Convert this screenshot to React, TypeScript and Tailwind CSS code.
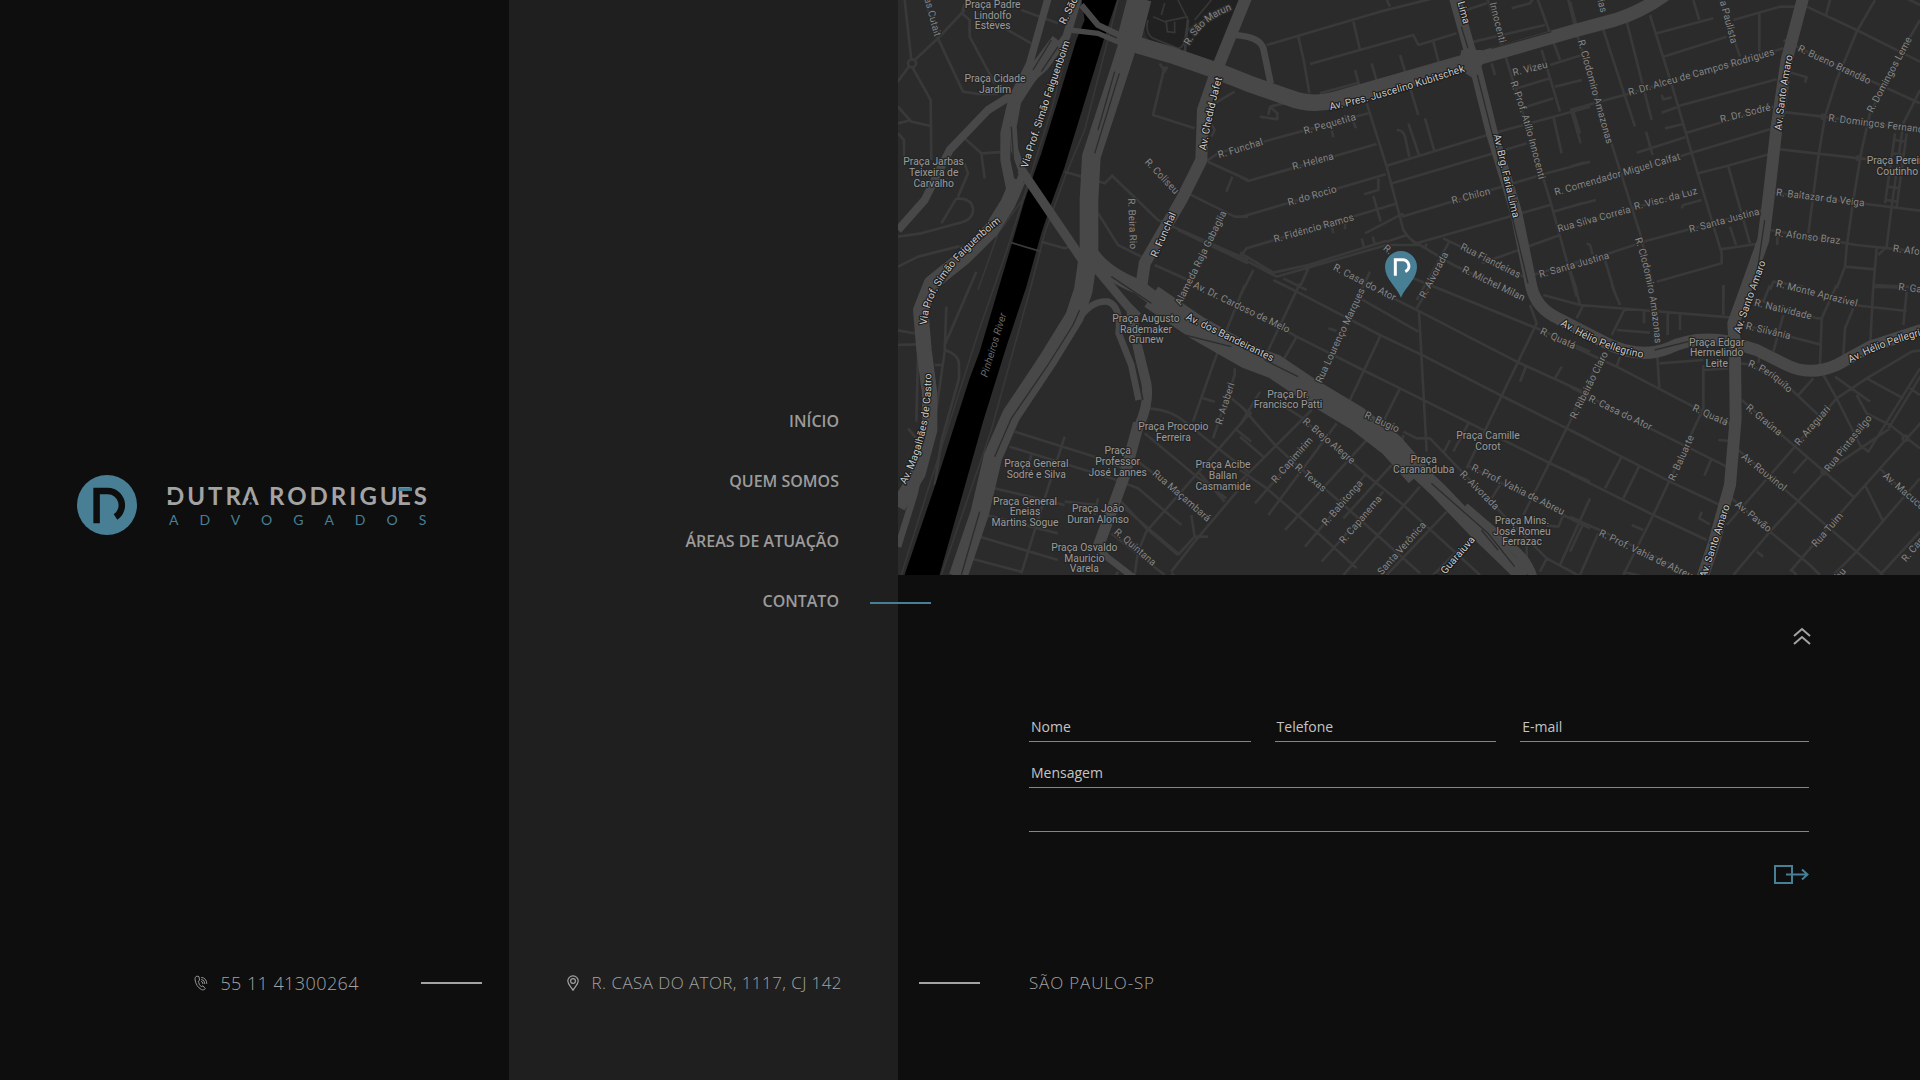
import React from "react";

type Label = { t: string; p: number[]; major?: boolean };
type Place = { x: number; y: number; lines: string[] };
type Tile = { x: number; y: number; streets: string; labels: Label[]; places: Place[] };

/* The map is drawn on a 3066 x 1725 canvas that is divided into six tiles. */
const tiles: Tile[] = [
  {
    x: 0,
    y: 0,
    streets:
      "M-5 250L40 190L120 115L200 30M120 115L80 0M120 115L195 275L240 282H300M40 180L20 0M42 200L98 300L100 480M0 320L40 365L98 378M0 370L40 360M200 10L192 40L215 60V110L290 250M240 40L400 130M370 30L480 70M200 415L250 460L330 455M250 460L260 535M0 400L18 420V470M175 595Q225 595 225 630Q225 660 180 670L70 700L0 710M175 595L130 670M200 490L210 520L180 590M0 800L60 770L180 740L220 740M800 200L765 345L890 385M785 190L800 215L808 200M930 485L1050 540M1003 530L985 575M870 580L1010 650L1050 650M640 525L780 660L1050 780M600 640L660 735L730 770M770 795L870 840M500 515L620 550L645 525M920 340L950 390L940 410M900 500L960 460L1070 425M950 310L1010 275M840 690L1050 790M430 725L500 745L530 735M860 160L870 60",
    labels: [
      { t: "R. São", p: [490, 75, 534, -12], major: true },
      { t: "Via Prof. Simão Faiguenboim", p: [378, 505, 440, 310, 508, 120], major: true },
      { t: "Via Prof. Simão Faiguenboim", p: [77, 970, 85, 830, 300, 660], major: true },
      { t: "Av. Chedid Jafet", p: [915, 447, 932, 340, 962, 235], major: true },
      { t: "R. Funchal", p: [768, 768, 825, 640], major: true },
      { t: "R. São Marun", p: [872, 120, 910, 55, 985, 25] },
      { t: "R. Coliseu", p: [753, 488, 831, 570] },
      { t: "R. Beira Rio", p: [700, 597, 706, 745] },
      { t: "Alameda Raja Gabaglia", p: [842, 907, 974, 640] },
      { t: "R. Funchal", p: [962, 465, 1092, 425] },
      { t: "Av. Dr. Cardoso de Melo", p: [892, 855, 1170, 988] },
      { t: "as Cutait", p: [90, 0, 118, 102] },
    ],
    places: [
      { x: 284, y: 14, lines: ["Praça Padre", "Lindolfo", "Esteves"] },
      { x: 291, y: 237, lines: ["Praça Cidade", "Jardim"] },
      { x: 107, y: 486, lines: ["Praça Jarbas", "Teixeira de", "Carvalho"] },
    ],
  },
  {
    x: 1026,
    y: 0,
    streets:
      "M80 135L420 35L600 -10M175 110L192 185L208 280M340 65L360 150M210 192L520 105L535 135L650 100M580 125L598 195M440 0L450 20M480 165L535 345M395 190L412 250M345 210L360 265M240 280L355 248M380 310L440 500L490 690Q510 720 530 730M70 425L385 340M0 530L25 543L410 432M0 652L437 523M0 770L20 745L465 612M440 497L760 400L1050 320M457 550L860 430M485 650L920 520L1050 485M530 730L930 615M470 390Q490 390 495 410L508 470M505 370L537 465M555 355L582 450M415 535V570L372 583M400 588L422 665M0 772L110 830L440 735L540 735L640 795L780 860M0 758L100 818L205 795L440 722M440 725L500 705L530 735M610 715L850 830M628 725L530 900M40 810L0 890M130 835L200 870M205 805L180 860M365 715L372 742M398 710L405 735M740 -10L800 180L930 600L1010 890M650 40L740 10M680 130L915 75M890 -10L960 180M985 0L1005 80M815 25L870 10L880 -5M905 150L960 335M830 265L930 235M860 320L940 295M940 350L965 460M1000 335L1020 400M725 790L960 705M860 830L1050 775M755 190L765 225M930 195L1026 165M945 260L1026 240M940 635L1026 610M375 700L490 640M90 320L130 310M90 320L85 345M60 350L112 358V340L90 320M275 390L280 412M340 365L348 385M275 680L280 700M315 670V688M560 730L555 745",
    labels: [
      { t: "Av. Pres. Juscelino Kubitschek", p: [273, 320, 422, 288, 668, 206], major: true },
      { t: "Av. Brg. Faria Lima", p: [771, 405, 828, 650], major: true },
      { t: "Lima", p: [662, 5, 680, 70], major: true },
      { t: "R. Pequetita", p: [193, 393, 345, 350] },
      { t: "R. Helena", p: [160, 500, 278, 468] },
      { t: "R. do Rocio", p: [145, 607, 287, 567] },
      { t: "R. Fidêncio Ramos", p: [105, 717, 337, 652] },
      { t: "R. Chilon", p: [637, 602, 748, 573] },
      { t: "R. Vizeu", p: [820, 218, 920, 193] },
      { t: "R. Prof. Atílio Innocenti", p: [822, 248, 870, 382, 905, 532] },
      { t: "Innocenti", p: [759, 10, 788, 125] },
      { t: "R. Casa do Ator", p: [284, 801, 464, 893] },
      { t: "R. Alvorada", p: [547, 890, 616, 760] },
      { t: "R.", p: [434, 740, 454, 756] },
      { t: "Rua Fiandeiras", p: [666, 739, 838, 825] },
      { t: "R. Michel Milan", p: [672, 808, 850, 893] },
      { t: "R. Santa Justina", p: [900, 823, 1104, 766] },
      { t: "R. Comendador Miguel Calfat", p: [948, 576, 1316, 470] },
      { t: "Rua Silva Correia", p: [956, 686, 1168, 628] },
    ],
    places: [],
  },
  {
    x: 2016,
    y: 0,
    streets:
      "M0 330L170 283L640 145M260 100L430 55M280 170L470 110M490 60L630 20L710 20L860 90L1050 185M370 0L388 60M450 -5L510 170M568 40V155M240 45L310 270L380 510L455 760V790L260 845M170 65L245 360M100 90L195 380M20 100L210 700L250 860M0 5L20 80M325 318L620 238M275 338L320 322M285 385L340 372M350 398L610 320M200 458L345 412M228 395L248 465M275 285L280 298L305 292M360 460L600 388M0 570L360 460M385 520L470 498L600 462M475 500L540 730M480 680L498 735M450 748L560 732M0 680L380 570M335 625L340 615L395 600M0 800L230 722L575 630M5 335L32 430M0 500L45 487M0 620L78 600M50 730L60 735L68 765M105 780L135 880M0 810L20 870M780 0L768 45M915 0L860 95L800 240L765 350L745 470L715 700M1050 60L1015 120L900 340L875 450L850 600L830 740L825 800L800 865M640 120L700 150L1050 310M655 215L710 232L705 248M630 335L760 350L1050 390M620 447L870 475L900 478M610 578L1050 632M600 690L860 735L1050 755M1050 270L1000 370L965 620L950 740L925 765M1010 400L980 620M975 400L945 610M825 800L915 808M920 745L910 860M915 855L1050 862M622 700V735M600 870L610 845L700 860M460 855V900M1010 -5L1050 15M975 420L1005 425M970 460L1000 465M962 510L995 515M955 560L988 565M950 600L982 605",
    labels: [
      { t: "ias", p: [92, -2, 102, 38] },
      { t: "R. Clodomiro Amazonas", p: [34, 125, 118, 425] },
      { t: "R. Clodomiro Amazonas", p: [206, 720, 250, 850, 264, 1022] },
      { t: "R. Dr. Alceu de Campos Rodrigues", p: [180, 276, 607, 156] },
      { t: "R. Dr. Sodré", p: [452, 358, 600, 321] },
      { t: "a Paulista", p: [460, 5, 492, 126] },
      { t: "R. Visc. da Luz", p: [194, 620, 380, 572] },
      { t: "R. Santa Justina", p: [360, 688, 565, 634] },
      { t: "R. Bueno Brandão", p: [690, 145, 897, 242] },
      { t: "R. Domingos Leme", p: [900, 332, 1016, 115] },
      { t: "R. Domingos Fernandes", p: [780, 354, 1087, 392] },
      { t: "R. Baltazar da Veiga", p: [622, 577, 880, 609] },
      { t: "R. Afonso Braz", p: [618, 698, 808, 722] },
      { t: "R. Afonso Braz", p: [972, 745, 1162, 770] },
      { t: "Av. Santo Amaro", p: [625, 388, 636, 270, 658, 168], major: true },
      { t: "Av. Santo Amaro", p: [502, 995, 577, 785], major: true },
      { t: "R. Monte Aprazível", p: [622, 850, 860, 910] },
      { t: "R. Gaivota", p: [985, 860, 1120, 876] },
    ],
    places: [{ x: 982, y: 482, lines: ["Praça Pereira", "Coutinho"] }],
  },
  {
    x: 0,
    y: 855,
    streets:
      "M-5 135L50 145M-5 180L55 178M145 65L140 200L110 410M235 -40L140 180M140 195Q185 210 183 240V280L130 470L110 600M110 240H135M60 210L55 410M30 430L55 460M350 440L590 515L700 560M335 485L640 580L720 610L850 720M500 455L440 640L370 865M290 610L500 660M265 690L480 745M245 755L480 825M225 822L370 860M400 510L385 560M600 640L590 690M500 650L600 660M755 370Q820 375 860 410L960 490L1050 560M740 445L890 570L985 640M720 530L780 575M880 690L890 755M680 670L840 805M640 745L800 870M820 860L890 770L1050 580M890 755L840 810M1060 380L745 740L720 800L710 870M1040 0L950 225L885 410M915 340L950 350M1010 250V270L945 460M1000 340L1060 390M900 560L980 650M1010 430L1060 470M930 755L890 755M660 640L750 735L840 810M820 865L860 900M660 860L650 880",
    labels: [
      { t: "Av. Magalhães de Castro", p: [12, 598, 92, 450, 90, 262], major: true },
      { t: "Av. dos Bandeirantes", p: [864, 92, 1128, 222], major: true },
      { t: "R. Araberi", p: [962, 417, 1000, 295] },
      { t: "Rua Maçambará", p: [770, 562, 932, 702] },
      { t: "R. Quintana", p: [654, 737, 770, 836] },
    ],
    places: [
      { x: 744, y: 101, lines: ["Praça Augusto", "Rademaker", "Grunew"] },
      { x: 826, y: 425, lines: ["Praça Procopio", "Ferreira"] },
      { x: 659, y: 498, lines: ["Praça", "Professor", "José Lannes"] },
      { x: 415, y: 537, lines: ["Praça General", "Sodré e Silva"] },
      { x: 975, y: 540, lines: ["Praça Acibe", "Ballan", "Casmamide"] },
      { x: 381, y: 649, lines: ["Praça General", "Eneias", "Martins Sogue"] },
      { x: 600, y: 671, lines: ["Praça João", "Duran Alonso"] },
      { x: 559, y: 788, lines: ["Praça Osvaldo", "Mauricio", "Varela"] },
    ],
  },
  {
    x: 1026,
    y: 855,
    streets:
      "M180 -5L85 195M100 -15L170 20L420 150L550 212L780 330L980 430L1050 465M0 60L170 155L375 258L480 310L680 410L920 530L1050 590M360 40L535 140M440 30L540 80L830 230L1050 330M520 -20L890 130L1050 200M170 155L130 225M420 155L330 345M480 310L430 410M390 -40L235 290M537 80L560 500M595 -40L530 70M870 60L890 115L680 550M860 240L840 290M965 245L945 280M1050 290L850 690M685 415L640 500M630 465L612 500M490 440L530 460H570L800 700L920 820L1050 890M680 540L970 690L955 725L920 722M970 690L1050 730M490 450L485 475M780 600L755 640M920 820L900 860M1050 640L960 840M265 130L290 138M860 780V820M185 400L380 570L490 660L720 870M0 360L105 480L170 540L300 650L540 865M0 555L80 610L230 740L350 850M215 375L0 590M290 415L85 690M215 460L45 655M380 465L135 735M375 570L195 785M455 540L310 700M430 620L245 830M540 605L310 870M620 680L440 870M700 750L580 870M60 320L0 420M110 350L190 400M0 455L70 515",
    labels: [
      { t: "Rua Lourenço Marques", p: [237, 287, 364, 15] },
      { t: "R. Quatá", p: [904, 137, 1004, 183] },
      { t: "R. Bugio", p: [377, 388, 475, 433] },
      { t: "R. Brejo Alegre", p: [194, 405, 340, 530] },
      { t: "R. Capimirim", p: [102, 586, 210, 463] },
      { t: "R. Texas", p: [170, 543, 254, 613] },
      { t: "R. Babitonga", p: [252, 716, 362, 590] },
      { t: "R. Capanema", p: [305, 770, 418, 637] },
      { t: "Santa Verônica", p: [420, 862, 550, 717] },
      { t: "R. Guaraiuva", p: [584, 890, 700, 757], major: true },
      { t: "R. Alvorada", p: [667, 564, 770, 667] },
      { t: "R. Prof. Vahia de Abreu", p: [699, 546, 970, 681] },
      { t: "R. Ribeirão Claro", p: [1000, 395, 1094, 205] },
    ],
    places: [
      { x: 144, y: 328, lines: ["Praça Dr.", "Francisco Patti"] },
      { x: 551, y: 523, lines: ["Praça", "Carananduba"] },
      { x: 744, y: 453, lines: ["Praça Camille", "Corot"] },
      { x: 846, y: 707, lines: ["Praça Mins.", "José Romeu", "Ferrazac"] },
    ],
  },
  {
    x: 2016,
    y: 855,
    streets:
      "M-80 30L30 60L480 97M15 0L30 60M125 0L150 60M40 60L20 100M460 0V90M165 70L125 150M140 135L240 143M222 75V115M293 80V150M330 85V135M262 215L268 310M268 235L400 225M150 215L140 245M400 240V370L250 690L160 870M400 255L475 250M0 180L140 245L370 365L485 420M0 305L240 430L470 545M0 435L155 515L300 590L450 660M0 565L250 690L410 765M0 695L100 740L350 860M155 515L105 610M207 545L160 640M425 520L403 572M90 220L0 400M40 715L0 800M85 745L30 870M445 465L480 468M395 680L388 700L420 718M185 720L220 735M160 860L240 880M550 40L740 100H760M600 0L580 50M640 90L610 200M520 120L750 178M800 0L755 100L750 240M850 70L825 130L820 210M910 0L900 190M850 60L1010 78M1010 20L1000 120M910 5L1000 8M510 235L540 238L660 310L745 390M730 280L685 330M515 345L670 480L850 635M505 495L640 610L860 800L940 870M485 640L600 740L720 840L750 870M1060 195L1025 200L890 280L800 340L670 490L470 720M760 270L800 340L870 480L895 500L1050 250M795 275L900 350M860 330L890 385L960 420L1050 490M960 430L760 565L600 740L490 870M1060 260L955 430M890 280L1000 340M1060 405L850 640L660 860M1020 310L1050 330M930 550L1050 670M1050 580L860 800L790 870M885 600L940 710M1050 740L930 870M710 520L670 565M560 800L580 815M665 855L680 870M568 215L565 235",
    labels: [
      { t: "Av. Hélio Pellegrino", p: [-22, 113, 100, 188, 217, 208], major: true },
      { t: "Av. Hélio Pellegrino", p: [842, 222, 950, 165, 1078, 136], major: true },
      { t: "Av. Santo Amaro", p: [400, 872, 468, 665], major: true },
      { t: "R. Casa do Ator", p: [60, 339, 242, 426] },
      { t: "R. Quatá", p: [370, 367, 472, 413] },
      { t: "R. Baluarte", p: [305, 582, 362, 455] },
      { t: "R. Prof. Vahia de Abreu", p: [92, 743, 364, 873] },
      { t: "R. Natividade", p: [557, 53, 722, 93] },
      { t: "R. Silvânia", p: [530, 122, 660, 153] },
      { t: "R. Periquito", p: [540, 235, 612, 262, 660, 315] },
      { t: "R. Graúna", p: [532, 364, 632, 446] },
      { t: "R. Araguari", p: [680, 476, 774, 367] },
      { t: "Rua Pintassilgo", p: [770, 555, 898, 395] },
      { t: "Av. Rouxinol", p: [518, 510, 646, 612] },
      { t: "Av. Pavão", p: [500, 654, 600, 735] },
      { t: "Rua Tuim", p: [730, 782, 814, 686] },
      { t: "Av. Macuco", p: [944, 568, 1060, 668] },
      { t: "R. Canário", p: [1004, 822, 1085, 725] },
      { t: "Rua Inhambu", p: [715, 985, 818, 858] },
    ],
    places: [{ x: 440, y: 172, lines: ["Praça Edgar", "Hermelindo", "Leite"] }],
  },
];

const roads: { d: string; w: number }[] = [
  { w: 24, d: "M540 -5L505 110L440 200L350 280L270 330L155 450L80 600L0 690" },
  { w: 40, d: "M480 120L390 240L345 310" },
  { w: 30, d: "M345 300L322 400L322 480L340 570" },
  { w: 46, d: "M360 540L330 610L280 690L200 770L100 850L68 930L78 1050L95 1180V1290L60 1420L0 1520" },
  { w: 22, d: "M450 -5L395 190L350 280" },
  { w: 22, d: "M365 270L345 380L350 450L375 520L350 580" },
  { w: 20, d: "M80 1330L50 1480L0 1640" },
  { w: 28, d: "M370 510L560 790" },
  { w: 18, d: "M550 15L600 75L670 108" },
  { w: 16, d: "M515 90L600 100L670 130" },
  { w: 72, d: "M725 -5L690 130" },
  { w: 56, d: "M700 100L665 210L580 470L573 600V750L556 870L530 950L450 1080L340 1245L285 1370L245 1540L180 1730" },
  { w: 50, d: "M700 130L820 165L950 210L1050 250L1170 292Q1240 320 1310 300L1710 185" },
  { w: 40, d: "M1690 190L2020 95L2150 60Q2230 35 2300 -15" },
  { w: 20, d: "M1010 105Q1085 110 1096 145L1118 250" },
  { w: 36, d: "M1045 -10L960 200L915 330L910 480L850 600L780 720L740 790L728 870" },
  { w: 44, d: "M580 760Q620 820 720 860L800 920L900 985L1050 1070" },
  { w: 26, d: "M590 800L690 920L720 950" },
  { w: 74, d: "M760 890L900 985L1050 1070L1130 1100L1226 1165L1376 1255L1480 1335L1560 1425" },
  { w: 50, d: "M1540 1395L1620 1470L1730 1585L1880 1730" },
  { w: 26, d: "M1700 1520L1840 1640Q1890 1680 1905 1730" },
  { w: 20, d: "M540 960Q580 900 630 905Q670 920 662 1000L700 1095L722 1200" },
  { w: 30, d: "M700 930L718 1040L745 1150Q755 1210 720 1285" },
  { w: 34, d: "M722 1270L680 1425L640 1535L600 1640" },
  { w: 20, d: "M600 1640L625 1670L710 1735" },
  { w: 36, d: "M1670 -10L1712 140L1732 200L1782 400L1855 640L1900 860Q1915 925 1980 955L2116 1025Q2220 1080 2310 1045Q2390 1005 2496 1025L2576 1050L2666 1095Q2736 1130 2816 1095L2916 1040L3070 990" },
  { w: 36, d: "M2716 -10L2666 180L2636 380L2611 600L2596 720L2546 860L2506 970L2511 1055L2513 1255L2496 1455L2446 1635L2412 1735" },
];

function arc(p: number[]) {
  const [x1, y1] = p;
  const cx = p.length === 6 ? p[2] : (p[0] + p[2]) / 2;
  const cy = p.length === 6 ? p[3] : (p[1] + p[3]) / 2;
  const x2 = p[p.length - 2];
  const y2 = p[p.length - 1];
  const k = 40;
  const a = Math.hypot(cx - x1, cy - y1);
  const b = Math.hypot(x2 - cx, y2 - cy);
  const sx = x1 - ((cx - x1) / a) * k;
  const sy = y1 - ((cy - y1) / a) * k;
  const ex = x2 + ((x2 - cx) / b) * k;
  const ey = y2 + ((y2 - cy) / b) * k;
  return `M${sx} ${sy}L${x1} ${y1}Q${cx} ${cy} ${x2} ${y2}L${ex} ${ey}`;
}

function CityMap() {
  return (
    <svg
      viewBox="0 0 3066 1725"
      preserveAspectRatio="xMidYMid slice"
      className="absolute inset-0 h-full w-full"
      role="img"
      aria-label="Mapa do escritório"
      fontFamily="Roboto, sans-serif"
      fontSize="31"
    >
      <rect width="3066" height="1725" fill="#2b2b2b" />
      <path d="M745 -5H1035L970 190L760 125Q735 110 740 60Z" fill="#212121" />
      <g fill="none" stroke="#373737" strokeWidth="5">
        <path d="M750 60Q740 100 765 115L840 145Q855 145 860 120L870 60L840 0M765 50L800 65L870 50M805 65L808 95L830 98V65M800 10L790 45M890 60L940 0M870 90L950 40" />
        <path d="M660 0L640 80L560 390L505 520L440 700L400 855L280 1290L130 1725M510 140L460 330L330 740L240 1000L80 1500L10 1725M380 590L300 700L240 870M190 740L225 760" />
      </g>
      <g fill="none" stroke="#393939" strokeWidth="8" strokeLinejoin="round">
        {tiles.map((t, i) => (
          <path key={i} d={t.streets} transform={`translate(${t.x} ${t.y})`} />
        ))}
        <circle cx="42" cy="190" r="12" fill="#2b2b2b" />
        <circle cx="2776" cy="350" r="6" />
        <circle cx="2882" cy="475" r="6" />
        <circle cx="3022" cy="1315" r="8" />
        <circle cx="2778" cy="1416" r="7" />
      </g>
      <path
        d="M550 -5L560 60L535 120L480 300L430 460L380 600L345 720L300 870L245 1055L215 1135L115 1445L18 1730H123L200 1460L255 1265L325 1040L385 860L430 700L460 610L500 500L620 110L658 -5Z"
        fill="#000"
      />
      <path d="M340 728L430 755" stroke="#3a3a3a" strokeWidth="5" />
      <g fill="none" stroke="#484848" strokeLinejoin="round">
        {roads.map((r, i) => (
          <path key={i} d={r.d} strokeWidth={r.w} />
        ))}
      </g>
      <path d="M1690 150L1750 150L1770 170L1738 215L1725 235L1680 205Z" fill="#484848" />
      <g fill="none" stroke="#2d2d2d" strokeWidth="4">
        <path d="M664 220L590 460M650 215L600 390M545 930L525 975L450 1095L340 1255L290 1370M245 1535L190 1725M1780 145L1960 95M1690 80L1710 145M1738 225L1790 430L1890 850M460 120L405 210M480 140L430 215M340 380L350 530M700 1030L735 1200M640 830L760 910M800 990L1000 1040M1100 1080L1200 1130M1600 1450L1770 1600L1850 1700M1750 1590L1800 1650M2270 1050L2370 1025M2600 660L2580 800" />
      </g>
      <g textAnchor="middle" strokeLinejoin="round" paintOrder="stroke">
        {tiles.map((t, i) => (
          <g key={i} transform={`translate(${t.x} ${t.y})`}>
            {t.labels.map((l, j) => (
              <React.Fragment key={j}>
                <path id={`way-${i}-${j}`} d={arc(l.p)} fill="none" />
                <text
                  dy="10"
                  fontSize={l.major ? 31 : 30}
                  fill={l.major ? "#c8c8c8" : "#868686"}
                  stroke={l.major ? "#1c1c1c" : "#2b2b2b"}
                  strokeWidth={l.major ? 7 : 8}
                >
                  <textPath href={`#way-${i}-${j}`} startOffset="50%">
                    {l.t}
                  </textPath>
                </text>
              </React.Fragment>
            ))}
            {t.places.map((p, j) => (
              <text key={j} fill="#9a9a9a" stroke="#252525" strokeWidth="7">
                {p.lines.map((line, k) => (
                  <tspan key={k} x={p.x} y={p.y + 10 + k * 32}>
                    {line}
                  </tspan>
                ))}
              </text>
            ))}
          </g>
        ))}
        <text transform="translate(287 1035) rotate(-73)" y="10" fill="#6a6a6a" fontStyle="italic">
          Pinheiros River
        </text>
      </g>
      <g transform="translate(1509 801)">
        <path d="M0 92C-14 58 -48 36 -48 0A48 48 0 0 1 48 0C48 36 14 58 0 92Z" fill="#487f95" />
        <path d="M-17 26V-22H3A19 19 0 0 1 13 14" fill="none" stroke="#fff" strokeWidth="9" />
      </g>
    </svg>
  );
}

function Logo() {
  return (
    <svg viewBox="0 0 356 62" className="w-[356px] max-w-full" role="img" aria-label="Dutra Rodrigues Advogados">
      <circle cx="30" cy="31" r="30" fill="#487f95" />
      <path d="M19.6 49.3V17H31A14.2 14.2 0 0 1 38.500 43" fill="none" stroke="#0e0e0e" strokeWidth="6.500" />
      <g fontFamily="Lato, sans-serif">
        <text y="31" fontSize="24" fontWeight="700" letterSpacing="3" fill="#a3a3a3">
          <tspan x="89">DUTR</tspan>
          <tspan x="165">A </tspan>
          <tspan x="192">RODRIGU</tspan>
          <tspan x="320">ES</tspan>
        </text>
        <text x="92" y="51" fontSize="14" letterSpacing="21" fill="#487f95">
          ADVOGADOS
        </text>
      </g>
      <path d="M90 21H96V26H90Z" fill="#0e0e0e" />
      <path d="M173.500 19.500L178.500 32H168.500Z" fill="#0e0e0e" />
      <circle cx="173.500" cy="29.500" r="1.300" fill="#487f95" />
      <path d="M321 13.500H335V17H321Z" fill="#487f95" />
    </svg>
  );
}

const nav = ["INÍCIO", "QUEM SOMOS", "ÁREAS DE ATUAÇÃO", "CONTATO"];

const footerText = "text-[17px] leading-7 font-light text-[#a3a3a3] whitespace-nowrap";

function Field({ label, type }: { label: string; type: string }) {
  return (
    <label className="flex h-[26px] items-start gap-2 border-b border-[#858585] pt-px pl-0.5">
      <span className="whitespace-nowrap">{label}</span>
      <input type={type} className="h-5 w-full min-w-0 bg-transparent outline-none" />
    </label>
  );
}

export default function App() {
  return (
    <div className="grid min-h-screen grid-cols-[509fr_389fr_1022fr] bg-[#0e0e0e] font-['Open_Sans',sans-serif]">
      <header className="flex flex-col">
        <a href="#inicio" className="flex flex-1 items-center justify-center pt-10">
          <Logo />
        </a>
        <div className="flex items-center justify-end gap-[62px] pr-[27px] pb-[83px]">
          <a href="tel:551141300264" className={`flex items-center gap-3 tracking-wide ${footerText}`}>
            <svg viewBox="0 0 14 16" className="h-4 w-3.5" fill="none" stroke="#a3a3a3" strokeWidth="0.9">
              <path d="M3.200 1.200C1.400 1.200 .8 3 1.100 5C1.500 8.500 4 13 7.500 14.600C9 15.200 10.600 14.800 11.200 13.600L9 10.800L7.300 11.600C5.600 10.600 4.600 8.200 4.500 6.200L5.600 5L4.900 1.600Z" />
              <path d="M7 6.300Q8.800 6.600 9 9M7.200 4.300Q10.600 4.800 10.900 9M7.200 2.400Q12.600 3 12.800 8.800" />
            </svg>
            <span className="text-lg leading-7">55 11 41300264</span>
          </a>
          <span className="h-0.5 w-[61px] bg-[#a3a3a3]" />
        </div>
      </header>

      <div className="flex flex-col bg-[#1f1f1f]">
        <nav className="flex flex-1 flex-col justify-center pt-[53px]">
          {nav.map((item) => (
            <a
              key={item}
              href="#"
              className="relative flex h-[60px] items-center justify-end pr-[59px] text-base font-semibold text-[#9b9b9b]"
            >
              {item}
              {item === "CONTATO" && <span className="absolute top-[31px] -right-[33px] z-10 h-0.5 w-[61px] bg-[#487f95]" />}
            </a>
          ))}
        </nav>
        <address className={`flex items-center justify-end gap-3 pr-14 pb-[83px] tracking-wide not-italic ${footerText}`}>
          <svg viewBox="0 0 14 16" className="h-4 w-3.5" fill="none" stroke="#a3a3a3" strokeWidth="1.200">
            <path d="M7 15.200C5.500 12 1.800 9.500 1.800 6A5.200 5.200 0 0 1 12.200 6C12.200 9.500 8.500 12 7 15.200Z" />
            <circle cx="7" cy="6" r="2.400" />
          </svg>
          R. CASA DO ATOR, 1117, CJ 142
        </address>
      </div>

      <main className="flex flex-col">
        <div className="relative min-h-[400px] flex-1 overflow-hidden">
          <CityMap />
        </div>
        <div className="flex flex-col pt-[52px] pr-[111px] pl-[131px] text-sm leading-5 text-[#c4c4c4]">
          <button type="button" aria-label="Voltar ao topo" className="-mr-0.5 self-end">
            <svg viewBox="0 0 18 18" className="h-[18px] w-[18px]" fill="none" stroke="#a3a3a3" strokeWidth="2">
              <path d="M1 9L9 2L17 9M1 17L9 10L17 17" />
            </svg>
          </button>
          <form className="mt-[71px] flex flex-col">
            <div className="grid grid-cols-[221fr_221fr_288fr] gap-x-6">
              <Field label="Nome" type="text" />
              <Field label="Telefone" type="tel" />
              <Field label="E-mail" type="email" />
            </div>
            <label htmlFor="mensagem" className="mt-5 h-[26px] border-b border-[#858585] pt-px pl-0.5">
              Mensagem
            </label>
            <textarea
              id="mensagem"
              className="h-11 resize-none border-b border-[#858585] bg-transparent px-0.5 pt-5 outline-none"
            />
            <button type="submit" aria-label="Enviar" className="mt-8 self-end">
              <svg viewBox="0 0 35 20" className="h-5 w-[35px]" fill="none" stroke="#487f95" strokeWidth="2">
                <path d="M1 2H18V19H1ZM12 10.500H33.500M28 5.500L33.500 10.500L28 15.500" />
              </svg>
            </button>
          </form>
        </div>
        <div className={`mt-[85px] flex items-center gap-[49px] pb-[83px] pl-[21px] tracking-wider ${footerText}`}>
          <span className="h-0.5 w-[61px] bg-[#a3a3a3]" />
          SÃO PAULO-SP
        </div>
      </main>
    </div>
  );
}
